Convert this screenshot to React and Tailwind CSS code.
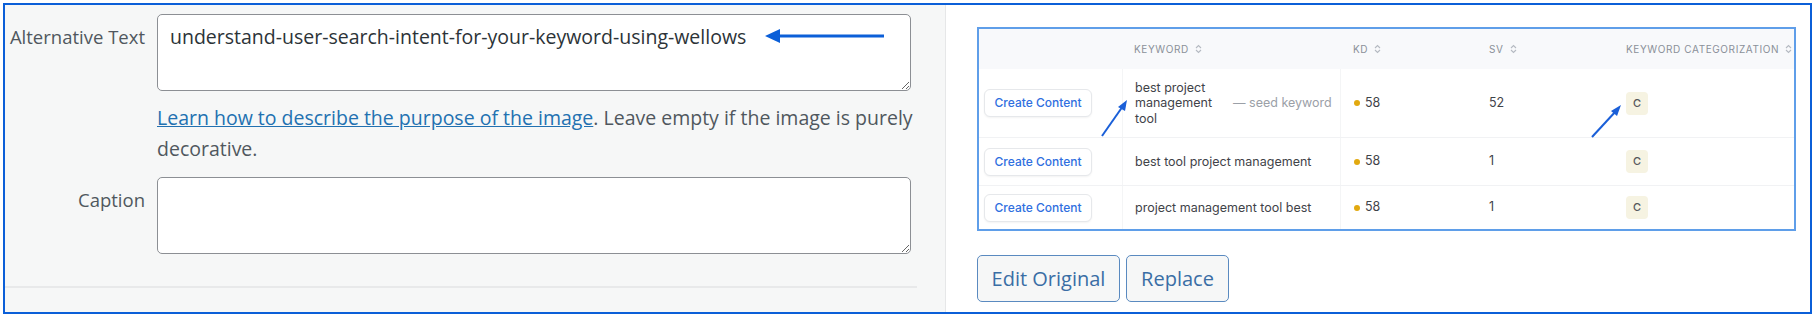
import { useState } from 'react'

const rows = [
  { keyword: ['best project', 'management', 'tool'], seed: true, kd: 58, sv: 52, cat: 'C' },
  { keyword: ['best tool project management'], kd: 58, sv: 1, cat: 'C' },
  { keyword: ['project management tool best'], kd: 58, sv: 1, cat: 'C' },
]

const SortIcon = () => (
  <svg width="7" height="10" viewBox="0 0 7 10" className="ml-[6px] inline-block">
    <path d="M1 4 L3.5 1.5 L6 4" fill="none" stroke="#b5bac2" strokeWidth="1.1" />
    <path d="M1 6 L3.5 8.5 L6 6" fill="none" stroke="#b5bac2" strokeWidth="1.1" />
  </svg>
)

function KeywordTable() {
  const grid = 'grid grid-cols-[143px_218px_136px_137px_1fr]'
  return (
    <div className="relative w-[819px] border-2 border-[#5f9ee9] bg-white font-['Inter',sans-serif]">
      <div className={`${grid} h-[40px] items-center bg-[#f8f9fb] text-[10px] tracking-[0.06em] text-[#8a9099]`}>
        <div />
        <div className="flex items-center pl-[12px]">KEYWORD<SortIcon /></div>
        <div className="flex items-center pl-[13px]">KD<SortIcon /></div>
        <div className="flex items-center pl-[13px]">SV<SortIcon /></div>
        <div className="flex items-center pl-[13px]">KEYWORD CATEGORIZATION<SortIcon /></div>
      </div>
      {rows.map((row, i) => (
        <div
          key={i}
          className={`${grid} items-center text-[12.5px] text-[#3f4349] ${i === 0 ? 'h-[68px]' : i === 1 ? 'h-[48px] border-t border-[#f1f2f4]' : 'h-[44px] border-t border-[#f1f2f4]'}`}
        >
          <div className="pl-[5px]">
            <button className="h-[28px] w-[108px] rounded-md border border-[#e6e8eb] bg-white text-[12px] font-medium text-[#2f6fe0] shadow-[0_1px_2px_rgba(0,0,0,0.05)]">
              Create Content
            </button>
          </div>
          <div className="flex h-full items-center border-l border-[#f4f5f6] pl-[12px]">
            <div className="leading-[15.5px]">
              {row.keyword.map((line) => (
                <div key={line}>{line}</div>
              ))}
            </div>
            {row.seed && <span className="ml-[21px] text-[#9ba0a7]">— seed keyword</span>}
          </div>
          <div className="flex h-full items-center border-l border-[#f4f5f6] pl-[13px]">
            <span className="mr-[5px] h-[6px] w-[6px] rounded-full bg-[#e2a90f]" />
            {row.kd}
          </div>
          <div className="pl-[13px]">{row.sv}</div>
          <div className="pl-[13px]">
            <span className="flex h-[23px] w-[22px] items-center justify-center rounded-[4px] bg-[#f6f3e2] text-[11px] font-medium text-[#55585c]">
              {row.cat}
            </span>
          </div>
        </div>
      ))}
      <svg className="pointer-events-none absolute left-[120px] top-[68px]" width="32" height="42" viewBox="0 0 32 42">
        <path d="M3 39 L24 9" stroke="#1a5fd8" strokeWidth="2" />
        <path d="M28 3 L19 10 L26 14 Z" fill="#1a5fd8" />
      </svg>
      <svg className="pointer-events-none absolute left-[610px] top-[73px]" width="36" height="38" viewBox="0 0 36 38">
        <path d="M3 35 L27 9" stroke="#1a5fd8" strokeWidth="2" />
        <path d="M32 3 L22 9 L28 14 Z" fill="#1a5fd8" />
      </svg>
    </div>
  )
}

export default function App() {
  const [alt, setAlt] = useState('understand-user-search-intent-for-your-keyword-using-wellows')
  const [caption, setCaption] = useState('')

  return (
    <div className="bg-white p-[3px]">
      <div className="flex h-[311px] border-2 border-[#0b5fd8] font-['Open_Sans',sans-serif]">
        <div className="flex w-[941px] flex-col border-r border-[#e6e7e8] bg-[#f6f7f7] pt-[9px]">
          <div className="flex">
            <label className="flex w-[140px] shrink-0 justify-end whitespace-nowrap pt-[10px] text-[18.5px] leading-[26px] text-[#50575e]">
              Alternative Text
            </label>
            <div className="relative ml-[12px]">
              <textarea
                value={alt}
                onChange={(event) => setAlt(event.target.value)}
                className="block h-[77px] w-[754px] rounded-[5px] border border-[#8c8f94] bg-white px-[12px] pt-[9px] text-[19.5px] leading-[26px] text-[#2c3338] outline-none"
              />
              <svg className="pointer-events-none absolute left-[608px] top-[15px]" width="120" height="14" viewBox="0 0 120 14">
                <path d="M12 7 L119 7" stroke="#0b5fd8" strokeWidth="3" />
                <path d="M0 7 L15 0 L15 14 Z" fill="#0b5fd8" />
              </svg>
            </div>
          </div>
          <p className="ml-[152px] mt-[11px] w-[760px] text-[19.5px] leading-[31px] text-[#50575e]">
            <a href="#" className="text-[#2271b1] underline">Learn how to describe the purpose of the image</a>
            . Leave empty if the image is purely decorative.
          </p>
          <div className="mt-[13px] flex">
            <label className="flex w-[140px] shrink-0 justify-end whitespace-nowrap pt-[10px] text-[18.5px] leading-[26px] text-[#50575e]">
              Caption
            </label>
            <textarea
              value={caption}
              onChange={(event) => setCaption(event.target.value)}
              className="ml-[12px] block h-[77px] w-[754px] rounded-[5px] border border-[#8c8f94] bg-white px-[12px] pt-[9px] text-[19.5px] leading-[26px] text-[#2c3338] outline-none"
            />
          </div>
          <div className="mr-[28px] mt-[32px] h-[2px] bg-[#e8e9ea]" />
        </div>

        <div className="flex flex-1 flex-col bg-white pl-[31px] pt-[22px]">
          <KeywordTable />
          <div className="mt-[24px] flex gap-[6px]">
            <button className="h-[47px] w-[143px] rounded-[5px] border border-[#5a8ac0] bg-[#f6f7f7] text-[20px] text-[#3a6ea5]">
              Edit Original
            </button>
            <button className="h-[47px] w-[103px] rounded-[5px] border border-[#5a8ac0] bg-[#f6f7f7] text-[20px] text-[#3a6ea5]">
              Replace
            </button>
          </div>
        </div>
      </div>
    </div>
  )
}
